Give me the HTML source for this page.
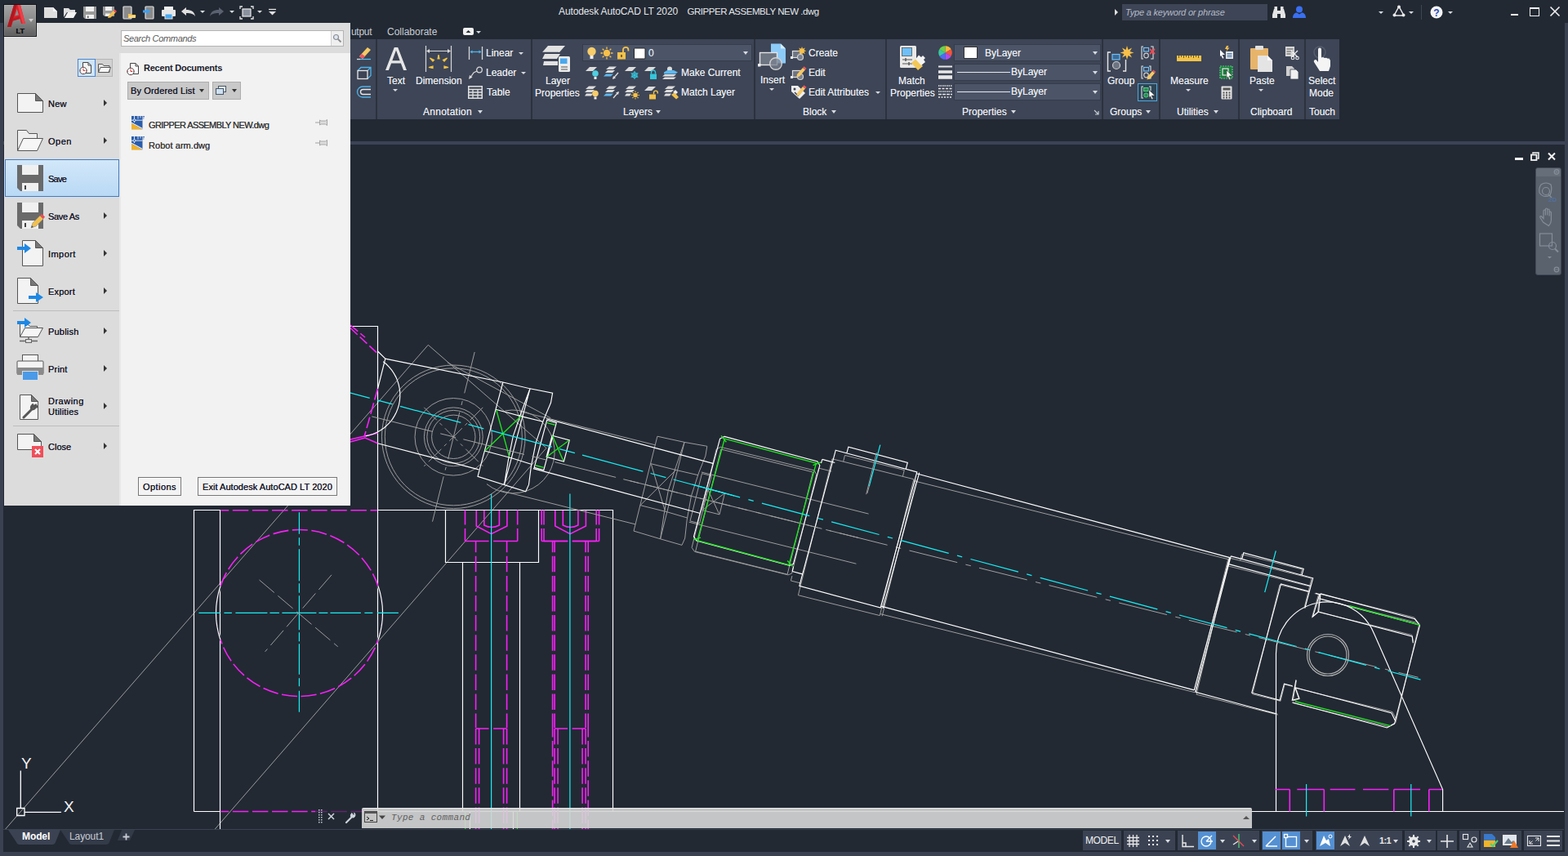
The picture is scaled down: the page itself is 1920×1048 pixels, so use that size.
<!DOCTYPE html>
<html lang="en">
<head>
<meta charset="utf-8">
<title>Autodesk AutoCAD LT 2020 - GRIPPER ASSEMBLY NEW.dwg</title>
<style>
*{box-sizing:border-box;margin:0;padding:0}
html,body{width:1920px;height:1048px;overflow:hidden;background:#222933;font-family:"Liberation Sans",sans-serif;font-size:12px;color:#e6e8ec}
.abs{position:absolute}
#app{position:relative;width:1920px;height:1048px;overflow:hidden;background:#222933}
.t{position:absolute;white-space:nowrap;line-height:14px;font-size:12px}
.panel{position:absolute;top:48px;height:98px;background:#3d4556}
.ptitle{position:absolute;top:130px;height:15px;line-height:15px;font-size:12px;color:#eceef2;white-space:nowrap;text-shadow:0 0 .5px rgba(236,238,242,.75)}
.rt{position:absolute;white-space:nowrap;line-height:14px;font-size:12px;color:#eceef2;text-shadow:0 0 .5px rgba(236,238,242,.75)}
.dd{position:absolute;width:0;height:0;border-left:3.5px solid transparent;border-right:3.5px solid transparent;border-top:4px solid #d8dbe0}
.dds{position:absolute;width:0;height:0;border-left:3px solid transparent;border-right:3px solid transparent;border-top:3px solid #d8dbe0}
svg{position:absolute;overflow:visible;fill:none}
</style>
</head>
<body>
<div id="app">
<!-- window frame + title bar -->
<div class="abs" style="left:0;top:28px;width:4px;height:1020px;background:#3a4151"></div>
<div class="abs" style="left:1916px;top:28px;width:4px;height:1020px;background:#3a4151"></div>
<div class="abs" style="left:0;top:1043px;width:1920px;height:5px;background:#3a4151"></div>
<div class="abs" style="left:4px;top:173px;width:1912px;height:4px;background:#3c4356"></div>
<div class="t" style="left:684px;top:7px;color:#e4e6ea;letter-spacing:-.125px">Autodesk AutoCAD LT 2020</div>
<div class="t" style="left:841.5px;top:7px;color:#e4e6ea;font-size:11.5px;letter-spacing:-.46px">GRIPPER ASSEMBLY NEW .dwg</div>
<div class="abs" style="left:1374px;top:5px;width:178px;height:20px;background:#3d4556"></div>
<div class="t" style="left:1378px;top:8px;font-style:italic;font-size:11px;color:#b4bac6;letter-spacing:-.2px">Type a keyword or phrase</div>
<div class="abs" style="left:1365px;top:11px;width:0;height:0;border-top:4px solid transparent;border-bottom:4px solid transparent;border-left:4px solid #e0e0e0"></div>
<div class="t" style="left:430px;top:32px;color:#c9cdd5;letter-spacing:-.3px">utput</div>
<div class="t" style="left:474px;top:32px;color:#c9cdd5">Collaborate</div>
<svg style="left:567px;top:34px" width="13" height="9" viewBox="0 0 13 9"><rect x="0" y="0" width="13" height="9" rx="2" fill="#f0f0f0"/><path d="M3.5 6l3-3 3 3z" fill="#222933"/></svg>
<div class="dds" style="left:583px;top:38px"></div>
<!-- QAT -->
<svg style="left:54px;top:8px" width="290" height="15" viewBox="0 0 290 15">
<path d="M0 1h11l5 5v8h-16z" fill="#dedede"/><path d="M11 1v5h5z" fill="#f8f8f8"/>
<path d="M24 13v-11h6l2 2h6v3h-10l-4 6z" fill="#dedede"/><path d="M25 14l4-7h11l-4 7z" fill="#f2f2f2"/>
<path d="M48 0h16v15h-14l-2-2z" fill="#9a9a9a"/><rect x="51" y="0" width="10" height="6" fill="#f0f0f0"/><rect x="51" y="10" width="10" height="5" fill="#f0f0f0"/><rect x="53" y="11.5" width="1.5" height="2.5" fill="#555"/>
<path d="M72 0h14v12h-12l-2-2z" fill="#9a9a9a"/><rect x="75" y="0" width="8" height="5" fill="#f0f0f0"/><rect x="75" y="8.5" width="6" height="3.5" fill="#f0f0f0"/><path d="M78 14l1-3 6-6 2.5 2.5-6 6z" fill="#f2c04e"/><path d="M85 5l1.5-1.5 2.5 2.5-1.5 1.5z" fill="#ef4b55"/>
<rect x="97" y="0" width="10" height="15" rx="1" fill="#8a8a8a" stroke="#e0e0e0" stroke-width="1.2"/><path d="M103 14v-5h3l1 1h5v4z" fill="#f2c04e"/><path d="M103 14l1.5-3h8l-1.5 3z" fill="#f8d880"/>
<rect x="124" y="0" width="10" height="15" rx="1" fill="#8a8a8a" stroke="#e0e0e0" stroke-width="1.2"/><path d="M121 4.5h5v-2l4 3.5-4 3.5v-2h-5z" fill="#3ca0f0"/>
<rect x="147" y="0" width="11" height="5" fill="#f0f0f0"/><rect x="144" y="4" width="17" height="8" rx="1" fill="#e6e6e6"/><rect x="148" y="9" width="9" height="6" fill="#4aa8ee" stroke="#e6e6e6" stroke-width="1"/>
<path d="M168 6l6-5v3c6 0 10 2 11 8-2-3-5-4-11-4v3z" fill="#e0e0e0"/>
<path d="M220 6l-6-5v3c-6 0-10 2-11 8 2-3 5-4 11-4v3z" fill="#5a6170"/>
<rect x="243" y="3" width="10" height="9" fill="#8a919e" stroke="#e8e8e8" stroke-width="1.2"/><path d="M240 3v-3h3M253 0h3v3M256 12v3h-3M243 15h-3v-3" stroke="#e8e8e8" stroke-width="1.3"/>
<path d="M275 3.5h9" stroke="#e0e0e0" stroke-width="1.3"/><path d="M275 6h9l-4.5 4.5z" fill="#e0e0e0"/>
</svg>
<div class="dds" style="left:245px;top:13px"></div><div class="dds" style="left:281px;top:13px"></div><div class="dds" style="left:315px;top:13px"></div>
<!-- right title icons -->
<svg style="left:1558px;top:8px" width="16" height="14" viewBox="0 0 16 14"><path d="M2 3h4v2h4v-2h4l2 7v4h-6v-5h-4v5h-6v-4z" fill="#e4e4e4"/><rect x="2.5" y="0" width="3.5" height="3" fill="#e4e4e4"/><rect x="10" y="0" width="3.5" height="3" fill="#e4e4e4"/></svg>
<svg style="left:1583px;top:7px" width="16" height="16" viewBox="0 0 16 16"><circle cx="8" cy="4.5" r="4" fill="#3a6ff0"/><path d="M0 15c0-5 3-6.5 5-6.5l3 2 3-2c2 0 5 1.5 5 6.5z" fill="#3a6ff0"/></svg>
<div class="dds" style="left:1688px;top:14px"></div>
<svg style="left:1705px;top:6px" width="16" height="15" viewBox="0 0 16 15"><path d="M8 2l-6 11h12z" stroke="#e8e8e8" stroke-width="1.5"/><circle cx="8" cy="2.5" r="2" fill="#e8e8e8"/><circle cx="2.5" cy="12.5" r="2" fill="#e8e8e8"/><circle cx="13.5" cy="12.5" r="2" fill="#e8e8e8"/></svg>
<div class="dds" style="left:1725px;top:14px"></div>
<div class="abs" style="left:1740px;top:6px;width:1px;height:18px;background:#3d4556"></div>
<svg style="left:1751px;top:7px" width="16" height="16" viewBox="0 0 16 16"><circle cx="8" cy="8" r="7.5" fill="#f4f4f4"/><text x="8" y="12.5" font-family="Liberation Sans, sans-serif" font-size="12" font-weight="bold" fill="#2a4ab8" text-anchor="middle">?</text></svg>
<div class="dds" style="left:1773px;top:14px"></div>
<div class="abs" style="left:1850px;top:17px;width:9px;height:2px;background:#f0f0f0"></div>
<div class="abs" style="left:1873px;top:9px;width:12px;height:11px;border:1.5px solid #f0f0f0;border-top-width:2px"></div>
<svg style="left:1898px;top:8px" width="12" height="12" viewBox="0 0 12 12"><path d="M.5.5l11 11M11.5.5l-11 11" stroke="#f0f0f0" stroke-width="1.6"/></svg>
<!-- inner doc window controls -->
<div class="abs" style="left:1855px;top:193px;width:10px;height:3px;background:#f4f4f4"></div>
<svg style="left:1874px;top:186px" width="11" height="11" viewBox="0 0 11 11"><path d="M3 2.5v-1.5h7v7h-1.5" stroke="#f4f4f4" stroke-width="1.5"/><rect x="1" y="3.5" width="6.5" height="6.5" stroke="#f4f4f4" stroke-width="1.8"/></svg>
<svg style="left:1895px;top:187px" width="10" height="9" viewBox="0 0 10 9"><path d="M1 .5l8 8M9 .5l-8 8" stroke="#f4f4f4" stroke-width="2"/></svg>
<!-- nav bar -->
<div class="abs" style="left:1880px;top:205px;width:32px;height:132px;background:#5a626e;border-radius:3px;border:1px solid #444b58"></div>
<div class="abs" style="left:1881px;top:206px;width:30px;height:10px;background:#666e7a;border-radius:2px 2px 0 0"></div>
<svg style="left:1881px;top:206px" width="30" height="130" viewBox="0 0 30 130" stroke="#858d99" stroke-width="1.2">
<circle cx="25" cy="4.5" r="2.8"/><path d="M23.5 3l3 3m0-3l-3 3" stroke-width=".8"/>
<path d="M6 20q6-4 12 0q2 6-1 13q-8 4-13-3q-1-6 2-10z"/><circle cx="12" cy="28" r="4.5"/><path d="M15 32l4 4"/>
<text x="15" y="41" font-family="Liberation Sans, sans-serif" font-size="8" font-weight="bold" fill="#54709c" stroke="none">2D</text>
<path d="M8.5 66l-3.5-5.5q-.8-1.8 1-2l3 3v-9q0-1.5 1.2-1.5t1.2 1.5v5v-7q0-1.5 1.2-1.5t1.2 1.5v7v-6q0-1.5 1.2-1.5t1.2 1.5v7v-4q0-1.4 1.1-1.4t1.1 1.4v9q0 4-3 7z"/>
<rect x="4.5" y="80" width="15" height="15"/><circle cx="20" cy="95" r="4.5"/><path d="M23 98.5l4 4" stroke-width="2"/>
<path d="M14 108h5l-2.5 2.5z" fill="#858d99" stroke="none"/>
<circle cx="25" cy="124" r="2.8"/><path d="M23 124h4" stroke-width=".8"/>
</svg>
<!-- ribbon panels -->
<div class="abs" style="left:429px;top:48px;width:1211px;height:98px;background:#2c323e"></div>
<div class="panel" style="left:429px;width:31px"></div>
<div class="panel" style="left:462px;width:188px"></div>
<div class="panel" style="left:652px;width:271px"></div>
<div class="panel" style="left:925px;width:159px"></div>
<div class="panel" style="left:1086px;width:263px"></div>
<div class="panel" style="left:1351px;width:68px"></div>
<div class="panel" style="left:1421px;width:95px"></div>
<div class="panel" style="left:1518px;width:79px"></div>
<div class="panel" style="left:1599px;width:41px"></div>
<!-- partial modify panel icons -->
<svg style="left:437px;top:56px" width="18" height="18" viewBox="0 0 18 18"><path d="M3 13l10-11 4 3-10 11z" fill="#f6c965"/><path d="M3 13l3-3 4 3-3 3z" fill="#ef5562"/><path d="M0 16.5h17" stroke="#4fc3f7" stroke-width="1.2"/><path d="M0 16.5h4" stroke="#ddd" stroke-width="1.2"/></svg>
<svg style="left:437px;top:81px" width="18" height="17" viewBox="0 0 18 17"><path d="M1 5.5l4-4h12v10l-4 4M5 1.5v0M17 1.5l-4 4" stroke="#4fb3ea" stroke-width="1.3"/><rect x="1" y="5.5" width="12" height="10" stroke="#e8e8e8" stroke-width="1.3"/></svg>
<svg style="left:437px;top:105px" width="18" height="15" viewBox="0 0 18 15"><path d="M17 1h-10a6.5 6.5 0 0 0 0 13h10" stroke="#4fb3ea" stroke-width="1.3"/><path d="M17 4.5h-9.5a3 3 0 0 0 0 6h9.5" stroke="#e8e8e8" stroke-width="1.3"/></svg>
<!-- Annotation panel -->
<svg style="left:471px;top:57px" width="28" height="30" viewBox="0 0 28 30"><path d="M1 29l10.8-28h4.4l10.8 28h-3.9l-3.2-8.6h-11.8l-3.2 8.6zM9.3 17.2h9.4l-4.7-12.8z" fill="#e6e6e6"/></svg>
<div class="rt" style="left:474px;top:92px">Text</div><div class="dds" style="left:481px;top:109px"></div>
<svg style="left:519px;top:55px" width="36" height="34" viewBox="0 0 36 34"><path d="M2.5 1v32M33.5 1v32" stroke="#d8d8d8" stroke-width="1.2"/><path d="M4 7.5h28" stroke="#d8d8d8"/><path d="M3 7.5l4-2.5v5zM33 7.5l-4-2.5v5z" fill="#d8d8d8"/><g fill="#f5c443"><path d="M17 17l1-5 1 5zM11 20l-3.5-4 5 2.5zM25 20l3.5-4-5 2.5zM6 27.5l5-1.5v2.5zM30 27.5l-5-1.5v2.5z" stroke="#f5c443" stroke-width="1.2"/></g></svg>
<div class="rt" style="left:509px;top:92px">Dimension</div>
<svg style="left:573px;top:57px" width="19" height="16" viewBox="0 0 19 16"><path d="M1.5 0v16M17.5 0v16" stroke="#d8d8d8" stroke-width="1.3"/><path d="M3 6.5h13" stroke="#4fb3ea" stroke-width="1.3"/><path d="M2.5 6.5l3-2v4zM16.5 6.5l-3-2v4z" fill="#4fb3ea"/></svg>
<div class="rt" style="left:595px;top:58px">Linear</div><div class="dds" style="left:635px;top:64px"></div>
<svg style="left:573px;top:81px" width="19" height="17" viewBox="0 0 19 17"><circle cx="14" cy="4.5" r="3.3" stroke="#d8d8d8" stroke-width="1.3"/><path d="M11 6l-4 2-4.5 6.5" stroke="#d8d8d8" stroke-width="1.3"/><path d="M1 16l1-5 3.5 2.5z" fill="#d8d8d8"/></svg>
<div class="rt" style="left:595px;top:82px">Leader</div><div class="dds" style="left:638px;top:88px"></div>
<svg style="left:573px;top:105px" width="18" height="16" viewBox="0 0 18 16"><rect x=".75" y=".75" width="16.5" height="14.5" stroke="#e0e0e0" stroke-width="1.5"/><path d="M1 4.5h16M1 8h16M1 11.5h16M6 4.5v11M12 4.5v11" stroke="#e0e0e0" stroke-width="1.3"/></svg>
<div class="rt" style="left:596px;top:106px">Table</div>
<div class="ptitle" style="left:518px;letter-spacing:.26px">Annotation</div><div class="dd" style="left:585px;top:135px"></div>
<!-- Layers panel -->
<svg style="left:664px;top:55px" width="35" height="34" viewBox="0 0 35 34"><path d="M7 1h21l-7 8h-21z" fill="#e2e2e2"/><path d="M3 11h19l-4 6h-18zM2 20h17v5h-18z" fill="#e2e2e2"/><path d="M0 9.5h20M0 18.5h18" stroke="#3d4455" stroke-width="1.5"/><rect x="20" y="14" width="14" height="19" rx="1.5" fill="#ececec"/><rect x="22" y="16.5" width="8.5" height="6.5" fill="#4aa8ee"/><path d="M23 27h8m-8 3h8" stroke="#555" stroke-width="1"/></svg>
<div class="rt" style="left:668px;top:92px">Layer</div>
<div class="rt" style="left:655px;top:107px">Properties</div>
<div class="abs" style="left:713px;top:54px;width:208px;height:21px;background:#4c5568;border:1px solid #353c4a"></div>
<svg style="left:718px;top:56px" width="84" height="18" viewBox="0 0 84 18"><circle cx="6.5" cy="7" r="5.2" fill="#f8cd6a"/><rect x="4.5" y="12" width="4" height="4" fill="#f0f0f0"/><circle cx="25" cy="9" r="4.2" fill="#f8c04a"/><path d="M25 1.5v2.5M25 14v2.5M17.5 9h2.5M30 9h2.5M19.7 3.7l1.8 1.8M28.5 12.5l1.8 1.8M30.3 3.7l-1.8 1.8M21.5 12.5l-1.8 1.8" stroke="#f8c04a" stroke-width="1.3"/><rect x="38" y="8" width="10" height="8.5" fill="#f2c24a"/><path d="M45 8v-3a3.2 3.2 0 0 1 6.4 0v1.5" stroke="#f2c24a" stroke-width="1.8"/><rect x="42" y="11" width="2" height="3" fill="#7a6220"/><rect x="58.5" y="3" width="13.5" height="13" rx="1" fill="#fff" stroke="#222" stroke-width="1"/></svg>
<div class="rt" style="left:794px;top:58px;color:#d8e4f4">0</div>
<div class="dd" style="left:910px;top:63px"></div>
<!-- row icons -->
<svg style="left:716px;top:81px" width="116" height="17" viewBox="0 0 116 17"><g fill="#dcdcdc"><path d="M6 1h9l-5 5h-9z"/><path d="M30 .5h9l-4 3.5h-9zM28 5h9l-3 3h-9z"/><path d="M54 1h9l-5 5h-9z"/><path d="M78 1h9l-5 5h-9z"/><path d="M98 10h14l-3 2.5h-14zM98 13.5h14l-3 2.5h-14z"/></g><path d="M26 9.5h9l-3 3h-9z" fill="#5fb8ee"/><circle cx="13" cy="9" r="3.8" fill="#4fd0e0"/><rect x="11.5" y="13" width="3" height="3" fill="#eee"/><path d="M41 8l-6 7" stroke="#dcdcdc" stroke-width="1.3"/><path d="M34 16l1-4 3 2.5z" fill="#dcdcdc"/><g stroke="#35c6dc" stroke-width="1.2"><path d="M61 6v10M56.7 8.5l8.6 5M65.3 8.5l-8.6 5"/><circle cx="61" cy="11" r="3" fill="none"/></g><rect x="80" y="9.5" width="8" height="6.5" fill="#35c6dc"/><path d="M81.5 9.5v-2a2.5 2.5 0 0 1 5 0v2" stroke="#35c6dc" stroke-width="1.4"/><circle cx="104" cy="3.5" r="3" fill="#dcdcdc"/><path d="M97 7.5l4-2.5h8l5 2.5-3 2h-14z" fill="#5fb8ee"/></svg>
<div class="rt" style="left:834px;top:82px">Make Current</div>
<svg style="left:716px;top:105px" width="116" height="17" viewBox="0 0 116 17"><g fill="#dcdcdc"><path d="M5 .5h9l-4 3.5h-9zM3 5h9l-3 3h-9zM2 9.5h8l-2 3h-8z"/><path d="M30 .5h9l-4 3.5h-9zM28 5h9l-3 3h-9z"/><path d="M54 .5h9l-4 3.5h-9zM52 5h9l-3 3h-9zM51 9.5h6l-2 3h-6z"/><path d="M78 1h9l-5 5h-9z"/><path d="M102 .5h9l-4 3.5h-9zM100 5h9l-3 3h-9zM99 9.5h7l-2 3h-7z"/></g><path d="M26 9.5h9l-3 3h-9z" fill="#5fb8ee"/><circle cx="13" cy="9.5" r="3.8" fill="#f8cd6a"/><rect x="11.5" y="13.5" width="3" height="3" fill="#eee"/><path d="M35 15l6-7" stroke="#dcdcdc" stroke-width="1.3"/><path d="M42 7l-1 4-3-2.5z" fill="#dcdcdc"/><circle cx="62" cy="11.5" r="2.8" fill="#f8c04a"/><path d="M62 6.5v1.5M62 15v1.5M57 11.5h1.5M65.5 11.5h1.5M58.5 8l1 1M64.5 14l1 1M65.5 8l-1 1M59.5 14l-1 1" stroke="#f8c04a" stroke-width="1.1"/><rect x="79" y="10.5" width="8" height="6" fill="#f2c24a"/><path d="M84.5 10.5v-2a2.4 2.4 0 0 1 4.8 0v1" stroke="#f2c24a" stroke-width="1.4"/><path d="M106 11l4-3 5 6-3 2.5z" fill="#f2c24a"/><path d="M108 8l3-3 3 3-2 2" fill="#eee"/></svg>
<div class="rt" style="left:834px;top:106px">Match Layer</div>
<div class="ptitle" style="left:763px">Layers</div><div class="dd" style="left:803px;top:135px"></div>
<!-- Block panel -->
<svg style="left:928px;top:53px" width="35" height="35" viewBox="0 0 35 35"><path d="M16 .5h12l6 6v18h-18z" fill="#8ccaf8"/><path d="M28 .5v6h6z" fill="#d4ecfc"/><rect x="2.5" y="11.5" width="21" height="15" fill="#6d7482" stroke="#e4e4e4" stroke-width="1.4"/><circle cx="22" cy="25" r="7.3" fill="#7a8190" fill-opacity=".75" stroke="#d0d0d0" stroke-width="1.4"/><rect x="0" y="25" width="3.5" height="3.5" fill="#eee"/></svg>
<div class="rt" style="left:931px;top:91px">Insert</div><div class="dds" style="left:942px;top:108px"></div>
<svg style="left:968px;top:57px" width="19" height="18" viewBox="0 0 19 18"><rect x="2.5" y="5.5" width="10" height="8" fill="#6d7482" stroke="#e0e0e0" stroke-width="1.2"/><circle cx="12" cy="13" r="3.5" fill="#7a8190" stroke="#d0d0d0" stroke-width="1.2"/><rect x="0" y="12" width="3" height="3" fill="#eee"/><path d="M14 0l1 2.8 2.8-1.3-1.3 2.8 2.8 1-2.8 1 1.3 2.8-2.8-1.3-1 2.8-1-2.8-2.8 1.3 1.3-2.8-2.8-1 2.8-1-1.3-2.8 2.8 1.3z" fill="#f8c04a"/></svg>
<div class="rt" style="left:990px;top:58px">Create</div>
<svg style="left:968px;top:81px" width="19" height="18" viewBox="0 0 19 18"><rect x="2.5" y="5.5" width="10" height="8" fill="#6d7482" stroke="#e0e0e0" stroke-width="1.2"/><circle cx="12" cy="13" r="3.5" fill="#7a8190" stroke="#d0d0d0" stroke-width="1.2"/><rect x="0" y="12" width="3" height="3" fill="#eee"/><path d="M8 10l7-8 3 2.5-7 8-3.5 1z" fill="#f6c965"/><path d="M15 2l1.5-1.8 3 2.5-1.5 1.8z" fill="#ef5562"/></svg>
<div class="rt" style="left:990px;top:82px">Edit</div>
<svg style="left:968px;top:104px" width="19" height="18" viewBox="0 0 19 18"><path d="M1 1h8l9 9-7 7-10-9z" fill="#eee"/><circle cx="5" cy="5" r="1.5" fill="#3d4455"/><path d="M5 9l4 4 3-3" stroke="#3d4455" stroke-width="1.5"/><path d="M8 10l7-8 3 2.5-7 8-3.5 1z" fill="#f6c965"/><path d="M15 2l1.5-1.8 3 2.5-1.5 1.8z" fill="#ef5562"/></svg>
<div class="rt" style="left:990px;top:106px">Edit Attributes</div><div class="dds" style="left:1072px;top:112px"></div>
<div class="ptitle" style="left:983px">Block</div><div class="dd" style="left:1018px;top:135px"></div>
<!-- Properties panel -->
<svg style="left:1101px;top:55px" width="34" height="34" viewBox="0 0 34 34"><rect x="1" y="1" width="20" height="27" rx="1.5" fill="#e8e8e8"/><rect x="3.5" y="3.5" width="12" height="10" fill="#6ec0f8" stroke="#555" stroke-width=".8"/><path d="M4 18h12M4 23h12" stroke="#555" stroke-width="1"/><path d="M8 16v4M12 21v4" stroke="#555" stroke-width="1.4"/><path d="M15 22l6-5 8 9-6 5z" fill="#f2c858"/><path d="M20 17.5l4-5 3 2.5 2-2 3 3-2 2 2 3-5 4z" fill="#f4f4f4"/></svg>
<div class="rt" style="left:1100px;top:92px">Match</div>
<div class="rt" style="left:1090px;top:107px">Properties</div>
<svg style="left:1149px;top:56px" width="17" height="17" viewBox="0 0 17 17"><g transform="translate(8.5 8.5)"><path d="M0 0L0-8.3A8.3 8.3 0 0 1 7.2-4.15z" fill="#f8b83a"/><path d="M0 0L7.2-4.15A8.3 8.3 0 0 1 7.2 4.15z" fill="#f4543c"/><path d="M0 0L7.2 4.15A8.3 8.3 0 0 1 0 8.3z" fill="#b04cf0"/><path d="M0 0L0 8.3A8.3 8.3 0 0 1-7.2 4.15z" fill="#4c6cf4"/><path d="M0 0L-7.2 4.15A8.3 8.3 0 0 1-7.2-4.15z" fill="#3cc8a0"/><path d="M0 0L-7.2-4.15A8.3 8.3 0 0 1 0-8.3z" fill="#6cd048"/></g></svg>
<svg style="left:1149px;top:80px" width="17" height="17" viewBox="0 0 17 17"><path d="M0 1.5h17" stroke="#e8e8e8" stroke-width="2"/><path d="M0 8h17" stroke="#e8e8e8" stroke-width="3.5"/><path d="M0 14.5h17" stroke="#e8e8e8" stroke-width="4.5"/></svg>
<svg style="left:1149px;top:104px" width="17" height="16" viewBox="0 0 17 16"><path d="M0 1h17" stroke="#e8e8e8" stroke-width="1.3" stroke-dasharray="1.5 1"/><path d="M0 4.5h17" stroke="#e8e8e8" stroke-width="1.3" stroke-dasharray="3 1.5"/><path d="M0 8h17" stroke="#e8e8e8" stroke-width="1.3" stroke-dasharray="1.5 1"/><path d="M0 11.5h17" stroke="#e8e8e8" stroke-width="1.3" stroke-dasharray="4 1"/><path d="M0 15h17" stroke="#e8e8e8" stroke-width="1.3" stroke-dasharray="2 1.5"/></svg>
<div class="abs" style="left:1168px;top:54px;width:180px;height:21px;background:#4c5568;border:1px solid #353c4a"></div>
<div class="abs" style="left:1168px;top:78px;width:180px;height:21px;background:#4c5568;border:1px solid #353c4a"></div>
<div class="abs" style="left:1168px;top:102px;width:180px;height:21px;background:#4c5568;border:1px solid #353c4a"></div>
<div class="abs" style="left:1180px;top:57px;width:17px;height:15px;background:#fff;border:1px solid #333"></div>
<div class="rt" style="left:1206px;top:58px">ByLayer</div>
<div class="abs" style="left:1172px;top:88px;width:65px;height:1px;background:#e8e8e8"></div>
<div class="rt" style="left:1238px;top:81px">ByLayer</div>
<div class="abs" style="left:1172px;top:112px;width:65px;height:1px;background:#e8e8e8"></div>
<div class="rt" style="left:1238px;top:105px">ByLayer</div>
<div class="dd" style="left:1338px;top:63px"></div><div class="dd" style="left:1338px;top:87px"></div><div class="dd" style="left:1338px;top:111px"></div>
<div class="ptitle" style="left:1178px">Properties</div><div class="dd" style="left:1238px;top:135px"></div>
<svg style="left:1339px;top:134px" width="7" height="7" viewBox="0 0 7 7"><path d="M1 1l4.5 4.5M6 2v4h-4" stroke="#c8ccd4" stroke-width="1.2"/></svg>
<!-- Groups panel -->
<svg style="left:1355px;top:56px" width="34" height="33" viewBox="0 0 34 33"><path d="M5 8h-3.5v23h3.5M20 31h3.5v-14" stroke="#e8e8e8" stroke-width="1.4"/><rect x="7" y="10.5" width="9" height="6.5" fill="#3d6a94" stroke="#6ec0f8" stroke-width="1.2"/><circle cx="12" cy="24" r="4.5" fill="#6d7482" stroke="#ccc" stroke-width="1.2"/><path d="M25 0l1.5 5 4.5-2.5-2.5 4.5 5 1.5-5 1.5 2.5 4.5-4.5-2.5-1.5 5-1.5-5-4.5 2.5 2.5-4.5-5-1.5 5-1.5-2.5-4.5 4.5 2.5z" fill="#f8c04a"/></svg>
<div class="rt" style="left:1356px;top:92px">Group</div>
<svg style="left:1397px;top:56px" width="18" height="17" viewBox="0 0 18 17"><path d="M12 1h3v15h-3M3 1h-2v15h2" stroke="#e0e0e0" stroke-width="1.1"/><rect x="3.5" y="2.5" width="6" height="4.5" stroke="#6ec0f8" stroke-width="1.2"/><circle cx="6.5" cy="12" r="2.8" stroke="#ccc" stroke-width="1.2"/><path d="M11 4l6 6m0-6l-6 6" stroke="#ef4b55" stroke-width="1.8"/></svg>
<svg style="left:1397px;top:80px" width="18" height="18" viewBox="0 0 18 18"><path d="M10 1h2v6M3 1h-2v15h2M12 14v2h-2" stroke="#e0e0e0" stroke-width="1.1"/><rect x="3.5" y="2.5" width="6" height="4.5" stroke="#6ec0f8" stroke-width="1.2"/><circle cx="6.5" cy="12" r="2.8" stroke="#ccc" stroke-width="1.2"/><path d="M8 14l6-7 3 2.5-6 7-3.5 1z" fill="#f6c965"/><path d="M14 7l1.3-1.5 3 2.5-1.3 1.5z" fill="#ef5562"/></svg>
<div class="abs" style="left:1393px;top:102px;width:24px;height:22px;border:1px solid #4fa8dc;background:#2d4556"></div>
<svg style="left:1397px;top:105px" width="18" height="17" viewBox="0 0 18 17"><path d="M10 1h2v5M3 1h-2v14h2" stroke="#e0e0e0" stroke-width="1.1"/><rect x="3.5" y="2.5" width="5.5" height="4" fill="#2e8b57" stroke="#4cd07a" stroke-width="1"/><circle cx="6.3" cy="11.5" r="2.6" fill="#2e8b57" stroke="#4cd07a" stroke-width="1"/><path d="M10 5l7 7h-4l2 4-1.5.8-2-4-1.5 2z" fill="#fff" stroke="#333" stroke-width=".5"/></svg>
<div class="ptitle" style="left:1359px">Groups</div><div class="dd" style="left:1403px;top:135px"></div>
<!-- Utilities panel -->
<svg style="left:1441px;top:67px" width="30" height="9" viewBox="0 0 30 9"><rect x="0" y="1" width="30" height="7" fill="#f2c24a"/><path d="M2.5 1v3M5.5 1v2M8.5 1v3M11.5 1v2M14.5 1v3M17.5 1v2M20.5 1v3M23.5 1v2M26.5 1v3" stroke="#7a5a10" stroke-width="1"/></svg>
<div class="rt" style="left:1433px;top:92px">Measure</div><div class="dds" style="left:1452px;top:109px"></div>
<svg style="left:1493px;top:56px" width="18" height="18" viewBox="0 0 18 18"><path d="M1 5l6 6h-3.5l2 4-1.3.7-2-4-1.2 1.5z" fill="#fff"/><rect x="8" y="7" width="9" height="9" fill="#e8e8e8"/><path d="M9.5 9.5h6M9.5 11.5h6M9.5 13.5h6" stroke="#3a6ea8" stroke-width="1"/><path d="M9 0l-2 4h2.5l-1 3 4-4.5h-2.5l1.5-2.5z" fill="#f8c04a"/></svg>
<svg style="left:1493px;top:80px" width="18" height="18" viewBox="0 0 18 18"><rect x="1" y="1" width="15" height="15" fill="#1f7a3e" stroke="#4cd07a" stroke-width="1.2" stroke-dasharray="2 1"/><rect x="4" y="4" width="7" height="8" stroke="#e8e8e8" stroke-width="1.2"/><path d="M9 6l7 7h-4l2 4-1.5.8-2-4-1.5 2z" fill="#fff" stroke="#333" stroke-width=".5"/></svg>
<svg style="left:1495px;top:105px" width="14" height="17" viewBox="0 0 14 17"><rect x=".5" y=".5" width="13" height="16" rx="1" fill="#e4e4e4"/><rect x="2.5" y="2.5" width="9" height="3" fill="#555"/><g fill="#555"><rect x="2.5" y="7.5" width="2" height="2"/><rect x="6" y="7.5" width="2" height="2"/><rect x="9.5" y="7.5" width="2" height="2"/><rect x="2.5" y="10.5" width="2" height="2"/><rect x="6" y="10.5" width="2" height="2"/><rect x="9.5" y="10.5" width="2" height="2"/><rect x="2.5" y="13.5" width="2" height="2"/><rect x="6" y="13.5" width="2" height="2"/><rect x="9.5" y="13.5" width="2" height="2"/></g></svg>
<div class="ptitle" style="left:1441px">Utilities</div><div class="dd" style="left:1486px;top:135px"></div>
<!-- Clipboard panel -->
<svg style="left:1530px;top:55px" width="29" height="34" viewBox="0 0 29 34"><rect x="1" y="4" width="22" height="26" rx="1" fill="#e8b46a"/><rect x="7" y="1" width="10" height="5" rx="1" fill="#e0e0e0"/><path d="M10 13h12l6 6v14h-18z" fill="#e4e4e4"/><path d="M22 13v6h6z" fill="#fafafa"/></svg>
<div class="rt" style="left:1530px;top:92px">Paste</div><div class="dds" style="left:1541px;top:109px"></div>
<svg style="left:1573px;top:56px" width="18" height="18" viewBox="0 0 18 18"><rect x="1" y="1" width="11" height="12" fill="#d8d8d8"/><path d="M2.5 4h8M2.5 7h8M2.5 10h5" stroke="#555" stroke-width="1"/><path d="M8 6l8 8M16 6l-8 8" stroke="#eee" stroke-width="1.3"/><circle cx="10" cy="15" r="1.8" stroke="#eee" stroke-width="1.1"/><circle cx="15.5" cy="15" r="1.8" stroke="#eee" stroke-width="1.1"/></svg>
<svg style="left:1574px;top:80px" width="17" height="18" viewBox="0 0 17 18"><path d="M1 1h7l3 3v9h-10z" fill="#cfcfcf"/><path d="M6 5h7l3 3v9h-10z" fill="#f0f0f0" stroke="#3d4455" stroke-width=".8"/></svg>
<div class="ptitle" style="left:1531px">Clipboard</div>
<!-- Touch panel -->
<svg style="left:1606px;top:55px" width="26" height="34" viewBox="0 0 26 34"><circle cx="10" cy="9" r="7" stroke="#565d6c" stroke-width="1.5"/><path d="M8 5.5a2 2 0 0 1 4 0v10l2-.5 2 1 2-.3 2 1 1.5-.2 1.5 2.5v7l-2 6h-11l-7-11a2 2 0 0 1 3-2.5l2 2.5z" fill="#f4f4f4"/></svg>
<div class="rt" style="left:1602px;top:92px">Select</div>
<div class="rt" style="left:1603px;top:107px">Mode</div>
<div class="ptitle" style="left:1603px">Touch</div>
<!-- drawing area -->
<svg id="dwg" style="left:4px;top:177px;overflow:hidden" width="1911" height="838" viewBox="4 177 1911 838" fill="none" stroke-width="1.15">
<path stroke="#9c9c9c" stroke-width="1" d="M6.7 1015 L524.3 422.3 L669 548.5 L263.3 1015 M547.9 443.8 L674.2 511.7"/>
<path stroke="#ffffff" d="M429 399.5H462.5V993.5 M237.5 993.5V624.5H270 M462.5 624.5H750.5V993.5 M269.5 624.5V1015 M237.5 993.5H270 M462.5 993.5H1915 M545.5 624.5V688.5H659.5V624.5 M566.5 688.5V993.5 M636.5 688.5V993.5"/>
<path stroke="#f820f8" stroke-width="1.6" stroke-dasharray="19.5 4.6" stroke-dashoffset="9.7" d="M270.4 624.7H462 M270.4 993.5H462"/>
<circle cx="366.5" cy="750.5" r="102" stroke="#f820f8" stroke-width="1.6" stroke-dasharray="19.2 4.54" stroke-dashoffset="3.7"/>
<path stroke="#222933" stroke-width="2.5" d="M270 783.5 L268.7 779.5 L267.6 775.5 L266.7 771.4 L265.9 767.2 L265.3 763.1 L264.8 758.9 L264.6 754.7 L264.5 750.5 L264.6 746.3 L264.8 742.1 L265.3 737.9 L265.9 733.8 L266.7 729.6 L267.6 725.5 L268.7 721.5 L270 717.5 M463 717.5 L464.3 721.5 L465.4 725.5 L466.3 729.6 L467.1 733.8 L467.7 737.9 L468.2 742.1 L468.4 746.3 L468.5 750.5 L468.4 754.7 L468.2 758.9 L467.7 763.1 L467.1 767.2 L466.3 771.4 L465.4 775.5 L464.3 779.5 L463 783.5"/>
<path stroke="#ffffff" d="M270 783.5 L268.7 779.5 L267.6 775.5 L266.7 771.4 L265.9 767.2 L265.3 763.1 L264.8 758.9 L264.6 754.7 L264.5 750.5 L264.6 746.3 L264.8 742.1 L265.3 737.9 L265.9 733.8 L266.7 729.6 L267.6 725.5 L268.7 721.5 L270 717.5 M463 717.5 L464.3 721.5 L465.4 725.5 L466.3 729.6 L467.1 733.8 L467.7 737.9 L468.2 742.1 L468.4 746.3 L468.5 750.5 L468.4 754.7 L468.2 758.9 L467.7 763.1 L467.1 767.2 L466.3 771.4 L465.4 775.5 L464.3 779.5 L463 783.5"/>
<path stroke="#18eef4" stroke-width="1.2" d="M243.4 750.3H269.9 M274.4 750.3H283.9 M288.4 750.3H327.4 M330.4 750.3H341.9 M345.4 750.3H387.4 M390.4 750.3H401.4 M404.4 750.3H441.9 M446.4 750.3H456.4 M461.9 750.3H487.9 M366.4 627.3V653.8 M366.4 658.3V667.8 M366.4 672.3V711.3 M366.4 714.3V725.8 M366.4 729.3V771.3 M366.4 774.3V785.3 M366.4 788.3V825.8 M366.4 830.3V840.3 M366.4 845.8V871.8"/>
<path stroke="#9c9c9c" stroke-width="1" stroke-dasharray="24 6" d="M317.5 710L413.7 791.7 M406 703.8L324.6 797.8"/>
<path stroke="#f820f8" stroke-width="1.6" stroke-dasharray="19.5 4.6" stroke-dashoffset="1.5" d="M569.5 624.5V662.5 M633.7 624.5V662.5"/><path stroke="#f820f8" stroke-width="1.6" d="M569.5 662.5H598.6 M604.1 662.5H633.7"/><path stroke="#f820f8" stroke-width="1.6" d="M583.3 625V644L601.6 653.6L620.9 644V625 M592.8 625V643Q602.1 648 611.4 643V625"/><path stroke="#f820f8" stroke-width="1.6" stroke-dasharray="19.5 4.6" stroke-dashoffset="5.8" d="M582.6 662.5V891 M620.6 662.5V891"/><path stroke="#f820f8" stroke-width="1.6" d="M582.6 892H598.6 M604.1 892H620.6"/><path stroke="#f820f8" stroke-width="1.6" stroke-dasharray="19.5 4.6" d="M582.6 892V1015 M586.6 892V1015 M616.6 892V1015 M620.6 892V1015"/>
<path stroke="#f820f8" stroke-width="1.6" stroke-dasharray="19.5 4.6" stroke-dashoffset="1.5" d="M666 624.5V662.5 M730.2 624.5V662.5"/><path stroke="#f820f8" stroke-width="1.6" d="M666 662.5H695.1 M700.6 662.5H730.2"/><path stroke="#f820f8" stroke-width="1.6" d="M679.8 625V644L698.1 653.6L717.4 644V625 M689.3 625V643Q698.6 648 707.9 643V625"/><path stroke="#f820f8" stroke-width="1.6" stroke-dasharray="19.5 4.6" stroke-dashoffset="5.8" d="M679.1 662.5V891 M717.1 662.5V891"/><path stroke="#f820f8" stroke-width="1.6" d="M679.1 892H695.1 M700.6 892H717.1"/><path stroke="#f820f8" stroke-width="1.6" stroke-dasharray="19.5 4.6" d="M679.1 892V1015 M683.1 892V1015 M713.1 892V1015 M717.1 892V1015"/>
<path stroke="#f820f8" stroke-width="1.6" stroke-dasharray="19.5 4.6" stroke-dashoffset="1.5" d="M663.2 624.5V662.5 M733.6 624.5V662.5"/><path stroke="#f820f8" stroke-width="1.6" d="M663.2 662.5H695.4 M700.9 662.5H733.6"/><path stroke="#f820f8" stroke-width="1.6" stroke-dasharray="19.5 4.6" stroke-dashoffset="5.8" d="M676.6 662.5V891 M720.2 662.5V891"/><path stroke="#f820f8" stroke-width="1.6" stroke-dasharray="19.5 4.6" stroke-dashoffset="8" d="M676.6 891V1015 M720.2 891V1015"/>
<path stroke="#18eef4" stroke-width="1.2" d="M601.6 604.5V1015 M697.9 604.5V1015"/>
<path stroke="#f820f8" stroke-width="1.6" stroke-dasharray="12 4" d="M429 401.5L462.5 433 M429 398L447 413"/>
<path stroke="#ffffff" d="M462.5 430L471.8 439.2L462.5 476"/>
<path stroke="#f820f8" stroke-width="1.6" stroke-dasharray="14 4" d="M462.5 476L446 535"/>
<path stroke="#f820f8" stroke-width="1.6" d="M429 538L462.5 530.3 M429 541L447 536L462.5 542.7"/>
<path stroke="#ffffff" d="M575.4 993.5V1015 M628.5 993.5V1015"/>
<path stroke="#20e020" d="M569.8 993.5V1015 M633.4 993.5V1015"/>
<path stroke="#ffffff" d="M1562.5 993.5V801.5 A62.5 63.5 0 0 1 1683 776.8 L1766.6 966.5V993.5"/>
<path stroke="#f820f8" stroke-width="1.6" d="M1561.5 966.5H1579.3 M1588.3 966.5H1621.3 M1628.7 966.5H1659.4 M1669 966.5H1700.4 M1706.8 966.5H1739.1 M1749.8 966.5H1766 M1579.3 966.5V993.5 M1621.3 966.5V993.5 M1706.8 966.5V993.5 M1749.8 966.5V993.5"/>
<path stroke="#18eef4" stroke-width="1.2" d="M1599.6 960V999.5 M1727.8 960V999.5"/>
<path stroke="#ffffff" stroke-width="1.3" d="M20.7 989.5H30V998.5H20.7Z M25.3 989.5V943.5 M30 994.3H75"/>
<text x="26" y="941" font-family="Liberation Sans, sans-serif" font-size="19" fill="#f4f4f4" stroke="none" font-weight="normal">Y</text>
<text x="78" y="994" font-family="Liberation Sans, sans-serif" font-size="19" fill="#f4f4f4" stroke="none">X</text>
<path stroke="#9c9c9c" stroke-width="1" d="M1019 561.8 L1118.9 586.7 L1077.3 753.6 L977.4 728.7Z M1032.6 565.2 L1034.5 557.4 L1107.3 575.5 L1105.4 583.3 M1118.5 588.6 L1503.7 684.7 M1077.8 751.6 L1463 847.7 M1503.7 684.7 L1463 847.7 M1121.8 587.4 L1080.2 754.3 M1505.1 683 L1606 708.1 L1596.8 745 M1505.1 683 L1465 850.2 L1564.9 875.1 M1518.7 686.4 L1520.6 678.6 L1594.4 697 L1592.4 704.7 M1502.7 692.7 L1603.6 717.8 M1601.4 724.5 L1567 715.9 L1533.6 849.8 L1568 858.4 L1573.1 838 L1583.3 840.6 M1002.8 573.2 L1018.3 577.1 M968.4 711 L981 714.1 M1002.8 573.2 L1001.5 578 M968.4 711 L969.9 705.1 M882.4 547.3 L996.9 575.9 L999.8 580.7 L969.6 702 L965 703.9 L850.5 675.4 L847.1 670.4 L877.1 550.1Z M1615.7 727 L1731.6 755.9 L1737.9 763.7 L1709 884.7 L1699.9 889.7 L1583.4 860.7 M1613.6 749.2 L1728.9 777.4 L1730 785.4 M1586.7 842.4 L1705.1 871.6 L1709.5 880.3 M1609.7 726.6 L1614.5 727.8 L1606.6 755.3 L1613.6 749.2 M1615.7 727 L1613.6 749.2 M1587.5 833.1 L1583.3 858.1 L1591.5 855.7 L1586.7 842.4 M1614.3 732.9 L1733.8 762.1 M858.9 578 L1063.6 629.1 M843.7 639.2 L1048.4 690.2 M859.5 579.7 L871.2 582.6 L856.6 640.8 L845 637.9Z M866.2 598.4 L887.5 603.7 L881 629.9 L859.7 624.6Z M838.1 541.4 L865.8 546.3 L863.9 558.1 L855.6 578.8 L846.4 607.4 L841.1 637 L838.7 659 L835 667.4 L808.6 659.8 M829.6 575.9 L854.9 581.7 M816.9 626.8 L841.8 634.1 M804.9 534.2 L838.1 541.4 L808.6 659.8 L776 650.1Z M796.6 567.6 L829.6 575.9 M783.9 618.6 L816.9 626.8 M838.1 541.4 L827.5 571.7 L818.3 600.4 L813 630 L808.6 659.8 M802.3 544.8 L636.3 503.5 M778.1 641.9 L612.1 600.5 M596 592.6 L603.1 597.4 L610.8 600.9 L619 603.1 L627.5 603.9 L636 603.3 L644.3 601.3 L652.1 597.9 L659.3 593.3 L665.6 587.6 L670.8 580.9 L674.9 573.4 L677.6 565.3 L679 556.9 L678.9 548.4 L677.4 540 L674.6 531.9 L670.4 524.5 L665.1 517.8 L658.8 512.2 L651.5 507.6 L643.7 504.4 L635.4 502.5 L626.9 502 L618.4 502.9"/>
<g stroke="#9c9c9c" stroke-width="1"><circle cx="555.3" cy="534.8" r="26.7"/><circle cx="555.3" cy="534.8" r="32.4"/><circle cx="555.3" cy="534.8" r="35.9"/><circle cx="555.3" cy="534.8" r="47.3"/><circle cx="555.3" cy="534.8" r="84"/><circle cx="555.3" cy="534.8" r="87.8"/></g>
<path stroke="#9c9c9c" stroke-width="1" d="M581.2 431 L568.7 481.4 M562.8 504.7 L548.6 562 M543.2 583.3 L529.5 638.6 M566.2 491.1 L565 496 M546.2 571.7 L545.2 575.6"/>
<path stroke="#9c9c9c" stroke-width="1" stroke-dasharray="22 5 4 5" d="M519.3 498.8 L591.3 570.8 M591.3 498.8 L519.3 570.8"/>
<path stroke="#9c9c9c" stroke-width="1" d="M797.4 568.4 L814.2 625.1 M827.6 575.4 L784.5 618.2 M866.4 598.4 L880.3 628.7 M886.9 604.1 L860.2 624.5"/>
<path stroke="#9c9c9c" stroke-width="1" d="M882.8 550 L995.4 578 L964.1 703.2 L851.6 675.1Z"/>
<path stroke="#a0a0a0" stroke-width="1" d="M771.1 588.6 L829.8 603.2 M840.1 605.8 L846.4 607.4 M856.7 609.9 L915.4 624.6 M925.7 627.1 L932 628.7 M942.3 631.3 L1001 645.9 M1011.3 648.5 L1017.6 650.1 M1027.9 652.6 L1086.6 667.3 M1096.9 669.8 L1103.2 671.4 M1113.5 674 L1172.2 688.6 M1182.4 691.2 L1188.8 692.7 M1199 695.3 L1257.7 709.9 M1268 712.5 L1274.3 714.1 M1284.6 716.6 L1343.3 731.3 M1353.6 733.8 L1359.9 735.4 M1370.2 738 L1428.9 752.6 M1439.2 755.2 L1445.5 756.7 M1455.8 759.3 L1514.5 773.9 M1524.8 776.5 L1531.1 778.1 M1541.4 780.6 L1600.1 795.3 M1610.3 797.8 L1616.7 799.4 M1626.9 802 L1685.6 816.6 M1695.9 819.2 L1702.2 820.8 M1712.5 823.3 L1736.6 829.3"/>
<path stroke="#ffffff" d="M1023.3 551.2 L1122.8 577.9 L1078.2 744 L978.8 717.4Z M1036.8 554.9 L1038.9 547.1 L1111.3 566.5 L1109.2 574.3 M1122.2 579.8 L1505.7 682.6 M1078.8 742.1 L1462.2 844.9 M1505.7 682.6 L1462.2 844.9 M1125.7 578.7 L1081.1 744.8 M1507.2 680.9 L1607.7 707.8 L1597.8 744.5 M1507.2 680.9 L1464.1 847.4 L1563.6 874.1 M1520.7 684.5 L1522.8 676.8 L1596.2 696.5 L1594.1 704.2 M1504.6 690.6 L1605.1 717.5 M1602.8 724.1 L1568.5 714.9 L1532.8 848.2 L1567.1 857.4 L1572.5 837.1 L1582.6 839.8 M1006.8 562.4 L1022.3 566.5 M970.1 699.5 L982.6 702.9 M1006.8 562.4 L1005.5 567.2 M970.1 699.5 L971.6 693.7 M887 534.4 L1001 564.9 L1003.8 569.8 L971.4 690.6 L966.8 692.4 L852.8 661.9 L849.5 656.9 L881.6 537.1Z M1617 726.9 L1732.4 757.8 L1738.5 765.7 L1707.5 886.1 L1698.3 891 L1582.4 860 M1614.5 749 L1729.3 779.2 L1730.3 787.3 M1585.9 841.8 L1703.9 873 L1708.1 881.7 M1611 726.3 L1615.8 727.6 L1607.4 755 L1614.5 749 M1617 726.9 L1614.5 749 M1587 832.4 L1582.3 857.3 L1590.6 855.1 L1585.9 841.8 M1615.5 732.7 L1734.4 764 M669.2 512.8 L873 567.4 M652.9 573.6 L856.7 628.2 M669.7 514.5 L681.3 517.6 L665.8 575.5 L654.2 572.4Z M676.1 533.3 L697.3 539 L690.4 565 L669.1 559.3Z M649 475.8 L676.6 481.1 L674.5 493 L665.9 513.4 L656.2 541.9 L650.3 571.4 L647.5 593.4 L643.7 601.7 L617.5 593.6 M639.9 510.1 L665.1 516.3 M626.3 560.8 L651.1 568.5 M615.9 468 L649 475.8 L617.5 593.6 L585 583.4Z M607 501.3 L639.9 510.1 M593.4 552 L626.3 560.8 M649 475.8 L637.9 505.9 L628.2 534.4 L622.3 563.9 L617.5 593.6 M615.9 468 L471.5 439.1 M586.2 574.9 L462.3 542.8 M447.7 533.9 L452.5 532.8 L457.2 531.2 L461.7 529.2 L466.1 526.8 L470.1 524 L473.9 520.7 L477.3 517.2 L480.4 513.3 L483 509.1 L485.3 504.7 L487.1 500.1 L488.5 495.4 L489.4 490.5 L489.8 485.6 L489.8 480.6 L489.2 475.7 L488.2 470.8 L486.7 466.1 L484.8 461.6 L482.4 457.2 L479.7 453.1 L476.5 449.3 L473 445.8 L469.2 442.7"/>
<path stroke="#20e020" stroke-width="1.4" d="M887.3 537.1 L999.4 567.1 L966 691.7 L853.9 661.7Z M607.8 502 L623.6 559.1 M637.9 509.6 L594 551.7 M676.3 533.3 L689.6 563.8 M696.7 539.3 L669.6 559.3 M669.9 517.6 L679.6 520.2 M655.9 569.8 L665.6 572.4 M1652.4 741.8 L1738.3 765.2 M1585.9 858.7 L1702.7 888.6 M883.1 533.4 L889.3 541.2 M1004.8 566 L995.5 569.7 M849 660.9 L858 658.1 M970.7 693.5 L964.2 686.6"/>
<path stroke="#18eef4" stroke-width="1.2" d="M266.8 437.6 L341.1 457.5 M350.3 460 L369.2 465 M378.3 467.5 L452.7 487.4 M461.9 489.8 L480.7 494.9 M489.9 497.4 L564.3 517.3 M573.5 519.7 L592.3 524.8 M601.5 527.2 L675.8 547.2 M685 549.6 L703.9 554.7 M713 557.1 L787.4 577.1 M796.6 579.5 L815.4 584.6 M824.6 587 L899 607"/>
<path stroke="#a0a0a0" stroke-width="1" d="M455.3 509.9 L530 528.5 M539.2 530.8 L558.1 535.5 M567.3 537.8 L642 556.4 M651.3 558.7 L670.2 563.4 M679.4 565.7 L754.1 584.4 M763.3 586.7 L782.3 591.4 M791.5 593.7 L866.2 612.3 M875.4 614.6 L894.3 619.3 M903.5 621.6 L978.3 640.2 M987.5 642.5 L1006.4 647.3 M1015.6 649.6 L1051.5 658.5"/>
<path stroke="#18eef4" stroke-width="1.2" d="M847.7 593.2 L906.1 608.9 M916.4 611.6 L922.7 613.3 M932.9 616.1 L991.3 631.7 M1001.6 634.5 L1007.9 636.1 M1018.1 638.9 L1076.5 654.5 M1086.8 657.3 L1093.1 659 M1103.3 661.7 L1161.7 677.4 M1172 680.1 L1178.2 681.8 M1188.5 684.5 L1246.9 700.2 M1257.2 702.9 L1263.4 704.6 M1273.7 707.4 L1332.1 723 M1342.4 725.8 L1348.6 727.4 M1358.9 730.2 L1417.3 745.9 M1427.6 748.6 L1433.8 750.3 M1444.1 753 L1502.5 768.7 M1512.7 771.4 L1519 773.1 M1529.3 775.8 L1587.7 791.5 M1597.9 794.2 L1604.2 795.9 M1614.5 798.7 L1672.9 814.3 M1683.1 817.1 L1689.4 818.8 M1699.7 821.5 L1739.5 832.2"/>
<path stroke="#18eef4" stroke-width="1.2" d="M1077.8 544.6 L1064.3 595.3 M1562.3 674.4 L1548.7 725.1"/>
<path stroke="#9c9c9c" stroke-width="1" d="M1064.3 595.3 L1061.9 604 M1073.4 554.2 L1060.7 605.2"/>
<g stroke="#b0b0b0"><circle cx="1626" cy="802" r="25.5"/><circle cx="1626" cy="802" r="23"/></g>
</svg>
<!-- command line -->
<div class="abs" style="left:386px;top:988px;width:57px;height:26px;background:rgba(34,41,51,.72)"></div>
<svg style="left:389px;top:991px" width="50" height="18" viewBox="0 0 50 18"><g fill="#c8ccd4"><rect x="1" y="0" width="1.5" height="1.5"/><rect x="4" y="0" width="1.5" height="1.5"/><rect x="1" y="3" width="1.5" height="1.5"/><rect x="4" y="3" width="1.5" height="1.5"/><rect x="1" y="6" width="1.5" height="1.5"/><rect x="4" y="6" width="1.5" height="1.5"/><rect x="1" y="9" width="1.5" height="1.5"/><rect x="4" y="9" width="1.5" height="1.5"/><rect x="1" y="12" width="1.5" height="1.5"/><rect x="4" y="12" width="1.5" height="1.5"/><rect x="1" y="15" width="1.5" height="1.5"/><rect x="4" y="15" width="1.5" height="1.5"/></g><path d="M13 5l7 7m0-7l-7 7" stroke="#d0d4dc" stroke-width="1.5"/><path d="M35 16l7-7" stroke="#d0d4dc" stroke-width="2.2" stroke-linecap="round"/><path d="M41 9.5a3.5 3.5 0 0 1 1-5l1 2.5 2.5-.5-1-2.5a3.5 3.5 0 0 1-.5 6z" fill="#d0d4dc" stroke="#d0d4dc" stroke-width="1"/></svg>
<div class="abs" style="left:443px;top:989px;width:1090px;height:25px;background:rgba(214,214,214,.9);border-top:1px solid rgba(240,240,240,.9);border-radius:2px 2px 0 0"></div>
<svg style="left:446px;top:993px" width="30" height="16" viewBox="0 0 30 16"><rect x=".5" y=".5" width="15" height="13" fill="#c4c4c4" stroke="#444"/><rect x=".5" y=".5" width="15" height="2.5" fill="#555"/><path d="M3 7l3 2-3 2M7 11.5h4" stroke="#222" stroke-width="1"/><path d="M18 5.5h8l-4 4.5z" fill="#444"/></svg>
<div class="t" style="left:479px;top:994px;font-family:'Liberation Mono','DejaVu Sans Mono',monospace;font-style:italic;font-size:11px;color:#606060;letter-spacing:.35px">Type a command</div>
<div class="abs" style="left:1522px;top:999px;width:0;height:0;border-left:4px solid transparent;border-right:4px solid transparent;border-bottom:4px solid #555"></div>
<!-- layout tabs -->
<div class="abs" style="left:4px;top:1015px;width:1911px;height:1px;background:#3a4252"></div>
<svg style="left:10px;top:1016px" width="160" height="19" viewBox="0 0 160 19"><path d="M0 0h64l-6 15q-1 3-4 3h-40q-3 0-4-3z" fill="#3b4353"/><path d="M64 0h66l-6 15q-1 3-4 3h-42q-3 0-4-3z" fill="#333a48"/><path d="M139 0h16l-6 13h-15z" fill="#333a48"/><path d="M140.5 8.5h8M144.5 4.5v8" stroke="#c8ccd4" stroke-width="1.8"/></svg>
<div class="t" style="left:27px;top:1017px;font-weight:bold;color:#fff;letter-spacing:-.1px">Model</div>
<div class="t" style="left:85px;top:1017px;color:#c8ccd4;letter-spacing:-.1px">Layout1</div>
<!-- status bar -->
<style>.sg{position:absolute;top:1017px;height:24px;background:#3b4353}.sb{position:absolute;top:1018px;height:22px;background:#5490d2}</style>
<div class="sg" style="left:1326px;width:47px"></div>
<div class="sg" style="left:1376px;width:63px"></div>
<div class="sg" style="left:1442px;width:100px"></div>
<div class="sg" style="left:1545px;width:62px"></div>
<div class="sg" style="left:1611px;width:106px"></div>
<div class="sg" style="left:1720px;width:38px"></div>
<div class="sg" style="left:1760px;width:24px"></div>
<div class="sg" style="left:1787px;width:24px"></div>
<div class="sg" style="left:1813px;width:50px"></div>
<div class="sg" style="left:1866px;width:47px"></div>
<div class="sb" style="left:1467px;width:22px"></div>
<div class="sb" style="left:1546px;width:22px"></div>
<div class="sb" style="left:1570px;width:22px"></div>
<div class="sb" style="left:1612px;width:22px"></div>
<div class="t" style="left:1329px;top:1022px;color:#f0f0f0;letter-spacing:-.4px">MODEL</div>
<svg style="left:1376px;top:1017px" width="540" height="24" viewBox="1376 0 540 24" stroke="#e8e8e8" stroke-width="1.3">
<path d="M1383 5v15M1387.5 5v15M1392 5v15M1380 8.5h15M1380 12.5h15M1380 16.5h15"/>
<g fill="#e8e8e8" stroke="none"><rect x="1406" y="6" width="2" height="2"/><rect x="1411" y="6" width="2" height="2"/><rect x="1416" y="6" width="2" height="2"/><rect x="1406" y="11" width="2" height="2"/><rect x="1411" y="11" width="2" height="2"/><rect x="1416" y="11" width="2" height="2"/><rect x="1406" y="16" width="2" height="2"/><rect x="1411" y="16" width="2" height="2"/><rect x="1416" y="16" width="2" height="2"/></g>
<path d="M1448 5v14.5h14M1448 15h4v4.5" stroke-width="1.4"/>
<circle cx="1477" cy="13" r="6" stroke="#fff"/><path d="M1477 13h8M1477 13l7-7" stroke="#fff"/>
<path d="M1517 4v17" stroke="#4cd07a"/><path d="M1510 6l13 13" stroke="#ef4b55"/><path d="M1510 17l6-4" stroke="#e8e8e8"/>
<path d="M1550 19h14M1550 19l12-12" stroke="#fff" stroke-width="1.5"/>
<rect x="1574.5" y="7.5" width="13" height="12" stroke="#fff"/><rect x="1572.5" y="4.5" width="4" height="4" stroke="#fff" fill="#4f8fd4"/>
<path d="M1616 19l5-13 3 6 3-2 2 9-6-4z" fill="#fff" stroke="none"/><circle cx="1629" cy="7" r="2" stroke="#fff" stroke-width="1"/>
<path d="M1641 19l6-13 6 13-6-4z" fill="#e0e0e0" stroke="none"/><path d="M1653 4l-3 4h2l-1 3 4-4h-2z" fill="#e0e0e0" stroke="none"/>
<path d="M1665 19l6-13 6 13-6-4z" fill="#e0e0e0" stroke="none"/>
<circle cx="1731" cy="13" r="4" stroke-width="3.5"/><path d="M1731 5v16M1723 13h16M1725.3 7.3l11.4 11.4M1736.7 7.3l-11.4 11.4" stroke-width="2"/><circle cx="1731" cy="13" r="1.8" fill="#3b4353" stroke="none"/>
<path d="M1764 13h16M1772 5v16" stroke-width="1.6"/>
<rect x="1791.5" y="4.5" width="6" height="6" stroke-width="1.1"/><circle cx="1805" cy="11" r="3" stroke-width="1.1"/><path d="M1797 20l3-5 3 5z" stroke-width="1.1"/>
<path d="M1817 4h10l4 4v4h-14z" fill="#3a78c8" stroke="none"/><path d="M1817 12h14v8h-14z" fill="#f0b428" stroke="none"/><path d="M1825 16l3 3 6-7" stroke="#4cd07a" stroke-width="2"/>
<rect x="1840.5" y="5.5" width="16" height="12" fill="#dfe6ee" stroke="#e8e8e8" stroke-width="1"/><path d="M1842 16l5-7 4 5 2-2 3 4z" fill="#6a7a8a" stroke="none"/><path d="M1854 12l5 9h-10z" fill="#f07828" stroke="none"/>
<rect x="1870.5" y="6.5" width="16" height="12" stroke-width="1.1"/><path d="M1880 9h4v4M1884 9l-3.5 3.5M1877 16h-4v-4M1873 16l3.5-3.5" stroke-width="1"/>
<path d="M1894 7h16M1894 12.5h16M1894 18h16" stroke-width="2.2"/>
</svg>
<div class="t" style="left:1689px;top:1022px;color:#e8e8e8;font-size:11px;font-weight:bold;letter-spacing:-.7px">1:1</div>
<div class="dd" style="left:1427px;top:1028px"></div><div class="dd" style="left:1494px;top:1028px"></div><div class="dd" style="left:1533px;top:1028px"></div><div class="dd" style="left:1597px;top:1028px"></div><div class="dd" style="left:1706px;top:1028px"></div><div class="dd" style="left:1747px;top:1028px"></div>
<!-- application menu -->
<style>
.mi{position:absolute;left:59px;font-size:11px;line-height:13px;color:#1c1c2c;white-space:nowrap;letter-spacing:.2px;text-shadow:0 0 .4px #1c1c2c}
.marr{position:absolute;left:127px;width:0;height:0;border-top:4px solid transparent;border-bottom:4px solid transparent;border-left:4px solid #333}
.mico{left:21px;width:32px;height:32px}
</style>
<div class="abs" style="left:5px;top:28px;width:424px;height:591px;background:#dcdcdc"></div>
<div class="abs" style="left:146px;top:65px;width:283px;height:554px;background:#f2f2f2;border-left:2px solid #e8e8e8"></div>
<!-- search -->
<div class="abs" style="left:148px;top:37px;width:273px;height:20px;background:#fff;border:1px solid #b4b4b4"></div>
<div class="abs" style="left:405px;top:38px;width:15px;height:18px;background:#efefef;border-left:1px solid #d0d0d0"></div>
<div class="t" style="left:151px;top:40px;font-style:italic;font-size:11px;letter-spacing:-.33px;color:#5a5a5a">Search Commands</div>
<svg style="left:407px;top:41px" width="12" height="12" viewBox="0 0 12 12"><circle cx="4.5" cy="4.5" r="3" stroke="#8a8f98" stroke-width="1.2" fill="#dfe6ee"/><path d="M7 7l3.5 3.5" stroke="#8a8a8a" stroke-width="1.8"/></svg>
<!-- toggle buttons -->
<div class="abs" style="left:95px;top:72px;width:22px;height:22px;background:#cfe5f8;border:1px solid #4a86cf"></div>
<div class="abs" style="left:117px;top:72px;width:21px;height:22px;background:#d2d2d2;border:1px solid #b5b5b5;border-left:none"></div>
<svg style="left:97px;top:75px" width="18" height="17" viewBox="0 0 18 17"><path d="M4.5 1.5h6.5l3.5 3.5v9.5h-10z" stroke="#444" fill="#f4f4f4"/><path d="M11 1.5v3.5h3.5" stroke="#444"/><circle cx="5" cy="11.5" r="4.2" fill="#fff" stroke="#444"/><path d="M5 9v2.5h2.2" stroke="#c33"/><path d="M5 7.3v1M5 14.7v1M.8 11.5h1M8.2 11.5h1" stroke="#c33" stroke-width="1.2"/></svg>
<svg style="left:119px;top:76px" width="18" height="15" viewBox="0 0 18 15"><path d="M1.5 12.5v-10h5l1.5 2h7v8z" fill="#e8e8e8" stroke="#555"/><path d="M1.5 12.5l2.5-6h12.5l-2.5 6z" fill="#f6f6f6" stroke="#555"/></svg>
<!-- recent docs header -->
<svg style="left:155px;top:76px" width="18" height="17" viewBox="0 0 18 17"><path d="M4.5 1.5h6.5l3.5 3.5v9.5h-10z" stroke="#444" fill="#fafafa"/><path d="M11 1.5v3.5h3.5" stroke="#444"/><circle cx="5" cy="11.5" r="4.2" fill="#fff" stroke="#444"/><path d="M5 9v2.5h2.2" stroke="#c33"/><path d="M5 7.3v1M5 14.7v1M.8 11.5h1M8.2 11.5h1" stroke="#c33" stroke-width="1.2"/></svg>
<div class="t" style="left:176px;top:76px;font-size:11px;font-weight:bold;color:#1c1c2c;letter-spacing:-.22px">Recent Documents</div>
<div class="abs" style="left:156px;top:100px;width:100px;height:22px;background:#c9c9c9;border:1px solid #adadad"></div>
<div class="t" style="left:160px;top:104px;font-size:11px;color:#1c1c2c;letter-spacing:.15px;text-shadow:0 0 .4px #1c1c2c">By Ordered List</div>
<div class="dd" style="left:244px;top:109px;border-top-color:#333"></div>
<div class="abs" style="left:260px;top:100px;width:35px;height:22px;background:#c9c9c9;border:1px solid #adadad"></div>
<svg style="left:264px;top:105px" width="14" height="12" viewBox="0 0 14 12"><rect x="3.5" y=".5" width="9" height="7" fill="#eef3f8" stroke="#456"/><rect x=".5" y="3.5" width="9" height="7" fill="#cfe0f0" stroke="#456"/></svg>
<div class="dd" style="left:284px;top:109px;border-top-color:#333"></div>
<!-- recent files -->
<svg style="left:161px;top:142px" width="17" height="17" viewBox="0 0 17 17"><rect x="0" y="0" width="13.5" height="16.2" fill="#2b5dab"/><path d="M0 9L13.5 16.2H0z" fill="#f6b21f"/><path d="M0 8.3L13.5 15.5" stroke="#f2f2f2" stroke-width="1.1"/><path d="M3.5 0V8M0 5.2H13.5M8 0V3.5M11 0V2.5" stroke="#f2f2f2" stroke-width=".9"/><circle cx="3.5" cy="5.2" r="1.4" fill="#2b5dab" stroke="#fff" stroke-width=".8"/><rect x="14.3" y="0" width="1.5" height="1.5" fill="#2b5dab"/><rect x="14.3" y="2.5" width="1" height="1" fill="#2b5dab"/></svg>
<div class="t" style="left:182px;top:146px;font-size:11px;color:#3a3a3a;letter-spacing:-.6px;text-shadow:0 0 .4px #3a3a3a">GRIPPER ASSEMBLY NEW.dwg</div>
<svg style="left:161px;top:167px" width="17" height="17" viewBox="0 0 17 17"><rect x="0" y="0" width="13.5" height="16.2" fill="#2b5dab"/><path d="M0 9L13.5 16.2H0z" fill="#f6b21f"/><path d="M0 8.3L13.5 15.5" stroke="#f2f2f2" stroke-width="1.1"/><path d="M3.5 0V8M0 5.2H13.5M8 0V3.5M11 0V2.5" stroke="#f2f2f2" stroke-width=".9"/><circle cx="3.5" cy="5.2" r="1.4" fill="#2b5dab" stroke="#fff" stroke-width=".8"/><rect x="14.3" y="0" width="1.5" height="1.5" fill="#2b5dab"/><rect x="14.3" y="2.5" width="1" height="1" fill="#2b5dab"/></svg>
<div class="t" style="left:182px;top:171px;font-size:11px;color:#3a3a3a;letter-spacing:.05px;text-shadow:0 0 .4px #3a3a3a">Robot arm.dwg</div>
<svg style="left:386px;top:145px" width="17" height="10" viewBox="0 0 17 10"><path d="M0 5h5.5" stroke="#a8a8a8" stroke-width="1.1"/><path d="M5.5 2v6l1.5-1h5.5l2 1.5v-7l-2 1.5h-5.5z" fill="#dcdcdc" stroke="#a0a0a0" stroke-width=".9"/></svg>
<svg style="left:386px;top:170px" width="17" height="10" viewBox="0 0 17 10"><path d="M0 5h5.5" stroke="#a8a8a8" stroke-width="1.1"/><path d="M5.5 2v6l1.5-1h5.5l2 1.5v-7l-2 1.5h-5.5z" fill="#dcdcdc" stroke="#a0a0a0" stroke-width=".9"/></svg>
<!-- left items -->
<div class="abs" style="left:6px;top:195px;width:140px;height:46px;background:linear-gradient(#d2e7f9,#b9d9f5);border:1px solid #3f7cc6"></div>
<div class="abs" style="left:16px;top:380px;width:130px;height:1px;background:#bdbdbd"></div>
<div class="abs" style="left:16px;top:521px;width:130px;height:1px;background:#bdbdbd"></div>
<div class="mi" style="top:121px">New</div><div class="marr" style="top:122px"></div>
<div class="mi" style="top:167px;letter-spacing:.5px">Open</div><div class="marr" style="top:168px"></div>
<div class="mi" style="top:213px;letter-spacing:-.75px">Save</div>
<div class="mi" style="top:259px;letter-spacing:-.35px">Save As</div><div class="marr" style="top:260px"></div>
<div class="mi" style="top:305px;letter-spacing:.45px">Import</div><div class="marr" style="top:306px"></div>
<div class="mi" style="top:351px">Export</div><div class="marr" style="top:352px"></div>
<div class="mi" style="top:400px">Publish</div><div class="marr" style="top:401px"></div>
<div class="mi" style="top:446px">Print</div><div class="marr" style="top:447px"></div>
<div class="mi" style="top:485px"><span style="letter-spacing:.5px">Drawing</span><br>Utilities</div><div class="marr" style="top:493px"></div>
<div class="mi" style="top:541px;letter-spacing:0px">Close</div><div class="marr" style="top:542px"></div>
<!-- icons -->
<svg class="mico" style="top:110px" viewBox="0 0 32 32"><path d="M.5 4.5h22l9 9v14h-31z" fill="#f3f3f3" stroke="#555"/><path d="M22.5 4.5v9h9z" fill="#777" stroke="#555"/></svg>
<svg class="mico" style="top:156px" viewBox="0 0 32 32"><path d="M.5 28.5v-25h11l3 4h10v6" fill="#eee" stroke="#555"/><path d="M.5 28.5l7-15h24l-7 15z" fill="#f6f6f6" stroke="#555"/></svg>
<svg class="mico" style="top:202px" viewBox="0 0 32 32"><path d="M0 0h32v32h-28l-4-4z" fill="#6a6a6a"/><rect x="6" y="0" width="20" height="12" fill="#f0f0f0"/><rect x="6" y="22" width="20" height="10" fill="#f0f0f0"/><rect x="9" y="25" width="2" height="5" fill="#444"/></svg>
<svg class="mico" style="top:248px" viewBox="0 0 32 32"><path d="M0 0h32v32h-28l-4-4z" fill="#6a6a6a"/><rect x="6" y="0" width="20" height="12" fill="#f0f0f0"/><rect x="6" y="22" width="20" height="10" fill="#f0f0f0"/><rect x="9" y="25" width="2" height="5" fill="#444"/><path d="M17 31l2-6 9-9 4 4-9 9z" fill="#f2c04e" stroke="#8a8a8a" stroke-width=".6"/><path d="M28 16l2.5-2 3.5 3.5-2 2.5z" fill="#ef4b55"/><path d="M17 31l1-3 2 2z" fill="#555"/></svg>
<svg class="mico" style="top:294px" viewBox="0 0 32 32"><path d="M6.5 .5h16l9 9v22h-25z" fill="#f3f3f3" stroke="#555"/><path d="M22.5 .5v9h9z" fill="#777" stroke="#555"/><path d="M0 8h9v-4l8 6-8 6v-4h-9z" fill="#1e88e5"/></svg>
<svg class="mico" style="top:340px" viewBox="0 0 32 32"><path d="M.5 .5h16l9 9v22h-25z" fill="#f3f3f3" stroke="#555"/><path d="M16.5 .5v9h9z" fill="#777" stroke="#555"/><path d="M14 22h9v-4l9 6-9 6v-4h-9z" fill="#1e88e5"/></svg>
<svg class="mico" style="top:388px" viewBox="0 0 32 32"><path d="M3.5 24.5v-16h9l3 3h9v4" fill="#eee" stroke="#555"/><path d="M3.5 24.5l6-11h22l-6 11z" fill="#f6f6f6" stroke="#555"/><path d="M14 24v4M3 29.5h22" stroke="#666" stroke-width="1.5"/><rect x="10.5" y="27.5" width="7" height="4" fill="#ddd" stroke="#666"/><path d="M0 5h9v-4l8 6-8 6v-4h-9z" fill="#1e88e5"/></svg>
<svg class="mico" style="top:434px" viewBox="0 0 32 32"><rect x="6.5" y=".5" width="19" height="10" fill="#f3f3f3" stroke="#555"/><rect x="0" y="8" width="32" height="16" rx="1" fill="#f3f3f3" stroke="#555"/><rect x="0" y="16" width="32" height="9" fill="#8a8a8a"/><rect x="6.5" y="20.5" width="19" height="11" fill="#4a9ae8" stroke="#ddd"/></svg>
<svg class="mico" style="top:483px" viewBox="0 0 32 32"><path d="M3.5 .5h14l8 8v22h-22z" fill="#f3f3f3" stroke="#555"/><path d="M17.5 .5v8h8z" fill="#777" stroke="#555"/><path d="M8 28l10-10m0 0a4 4 0 0 1 1-5l2 3 3-1-2-3a4 4 0 0 1-4 6" stroke="#555" stroke-width="3" fill="none" stroke-linecap="round"/></svg>
<svg class="mico" style="top:529px" viewBox="0 0 32 32"><path d="M.5 2.5h20l9 9v10h-29z" fill="#f3f3f3" stroke="#555"/><path d="M20.5 2.5v9h9z" fill="#777" stroke="#555"/><rect x="18" y="17" width="14" height="14" fill="#f04e5a"/><path d="M22 21l6 6m0-6l-6 6" stroke="#fff" stroke-width="2.2"/></svg>
<!-- bottom buttons -->
<div class="abs" style="left:169px;top:584px;width:53px;height:23px;background:#f3f3f3;border:1px solid #767676;box-shadow:inset 0 0 0 1px #fbfbfb"></div>
<div class="t" style="left:175px;top:589px;font-size:11px;color:#1c1c2c;letter-spacing:.44px;text-shadow:0 0 .4px #1c1c2c">Options</div>
<div class="abs" style="left:242px;top:584px;width:171px;height:23px;background:#f3f3f3;border:1px solid #767676;box-shadow:inset 0 0 0 1px #fbfbfb"></div>
<div class="t" style="left:248px;top:589px;font-size:11px;color:#1c1c2c;letter-spacing:.05px;text-shadow:0 0 .4px #1c1c2c">Exit Autodesk AutoCAD LT 2020</div>
<!-- app button -->
<div class="abs" style="left:4px;top:5px;width:41px;height:40px;background:linear-gradient(#a4a4a4,#8c8c8c 45%,#5e5e5e);border:1px solid #14171c;box-shadow:inset 0 0 0 1px rgba(255,255,255,.12)"></div>
<svg style="left:8px;top:6px" width="24" height="28" viewBox="0 0 24 28"><path d="M1 27L9 0h8l6 23h-5l-1.6-6-8.4 2.5-2.5 7.5z" fill="#d8232b"/><path d="M1 27L9 0h3.5L5.5 27z" fill="#b0171f"/><path d="M13.5 0H17l6 23h-3.5z" fill="#ee3e46"/><path d="M10.3 13.5L12.7 5l2.2 7.3z" fill="#8f8f8f"/><path d="M8 19.5l8.4-2.5-0.8-3-8.6 2.8z" fill="#c01a22"/></svg>
<div class="t" style="left:19.5px;top:33px;font-size:9px;font-weight:bold;color:#111;line-height:10px;letter-spacing:.2px;text-shadow:0 0 .5px #111">LT</div>
<div class="dd" style="left:35px;top:23px;border-top-color:#d0d0d0"></div>
</div>
</body>
</html>
